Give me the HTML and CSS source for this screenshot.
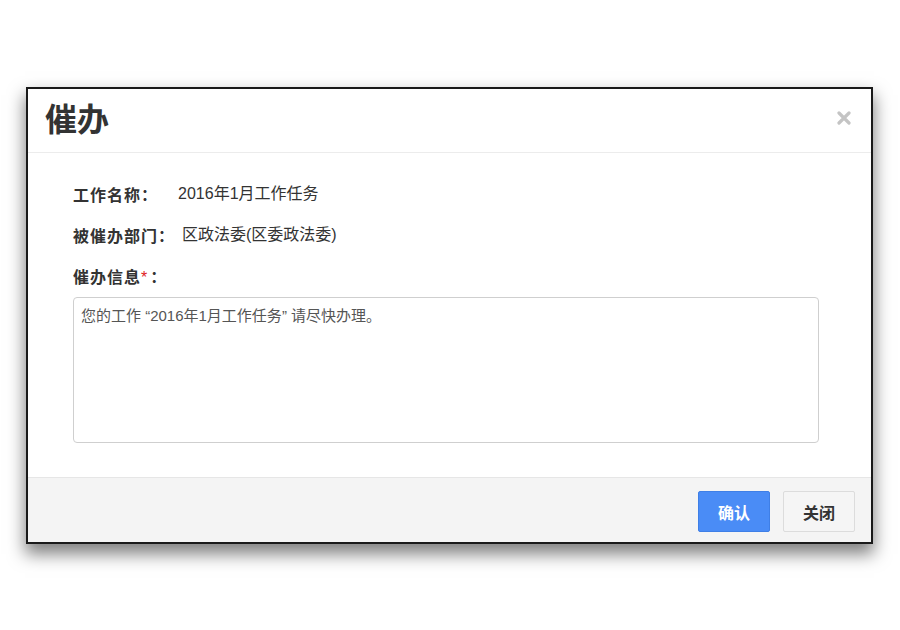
FILE: index.html
```html
<!DOCTYPE html>
<html lang="zh-CN">
<head>
  <meta charset="UTF-8" />
  <title>催办</title>
  <link rel="stylesheet" href="styles.css">
</head>
<body>

  <div class="modal">
    <div class="modal-header">
      <h2>催办</h2>
      <button class="btn-close" title="关闭">
        <svg width="14" height="14" viewBox="0 0 14 14">
          <path d="M2 2 L12 12 M12 2 L2 12" stroke="#c4c4c4" stroke-width="3.2" stroke-linecap="round" />
        </svg>
      </button>
    </div>

    <div class="modal-body">
      <div class="field">
        <span class="label">工作名称<span class="colon">：</span></span>
        <span class="value value-wide">2016年1月工作任务</span>
      </div>
      <div class="field">
        <span class="label">被催办部门<span class="colon">：</span></span>
        <span class="value">区政法委(区委政法委)</span>
      </div>
      <div class="field">
        <span class="label">催办信息<i class="required">*</i><span class="colon">：</span></span>
      </div>
      <textarea class="message">您的工作 “2016年1月工作任务” 请尽快办理。</textarea>
    </div>

    <div class="modal-footer">
      <button class="btn btn-primary">确认</button>
      <button class="btn btn-default">关闭</button>
    </div>
  </div>

</body>
</html>
```

FILE: styles.css
```css
body {
  margin: 0;
  min-height: 630px;
  background: #fff;
  font-family: "Liberation Sans", "Noto Sans CJK SC", sans-serif;
  color: #333;
  overflow: hidden;
}

.modal {
  width: 843px;
  margin: 87px 0 0 26px;
  border: 2px solid #1a1a1a;
  background: #fff;
  box-shadow: 0 9px 16px 1px rgba(0, 0, 0, 0.5);
}

.modal-header {
  height: 63px;
  display: flex;
  align-items: center;
  justify-content: space-between;
  padding: 0 19px 0 17px;
  border-bottom: 1px solid #ececec;
}

.modal-header h2 {
  margin: 0;
  font-size: 32px;
  font-weight: bold;
  color: #333;
  line-height: 1;
  padding-bottom: 2px;
}

.btn-close {
  background: transparent;
  border: none;
  padding: 0;
  width: 16px;
  height: 16px;
  display: flex;
  align-items: center;
  justify-content: center;
  cursor: pointer;
  margin-bottom: 6px;
}

.modal-body {
  padding: 31px 52px 34px 45px;
}

.field {
  height: 20px;
  line-height: 20px;
  margin-bottom: 21px;
  font-size: 16px;
  display: flex;
}

.field:nth-child(3) {
  margin-bottom: 11px;
}

.label {
  font-weight: bold;
  color: #333;
  letter-spacing: 1px;
}

.colon {
  font-family: "Noto Sans CJK TC", sans-serif;
}

.required {
  font-style: normal;
  color: #e02222;
  font-weight: normal;
  margin-right: 2px;
}

.value {
  color: #333;
  margin-left: 7px;
}

.value-wide {
  margin-left: 20px;
}

.message {
  display: block;
  box-sizing: border-box;
  width: 746px;
  height: 146px;
  padding: 8px 7px;
  border: 1px solid #cfcfcf;
  border-radius: 4px;
  font-family: inherit;
  font-size: 15px;
  line-height: 20px;
  color: #555;
  resize: none;
}

.modal-footer {
  display: flex;
  justify-content: flex-end;
  gap: 13px;
  padding: 13px 16px 10px;
  background: #f4f4f4;
  border-top: 1px solid #e6e6e6;
}

.btn {
  width: 72px;
  height: 41px;
  font-family: inherit;
  font-size: 16px;
  font-weight: bold;
  border-radius: 2px;
  cursor: pointer;
}

.btn-primary {
  background: #4a8cf6;
  border: 1px solid #3f7fe6;
  color: #fff;
}

.btn-default {
  background: #f5f5f5;
  border: 1px solid #dcdcdc;
  color: #333;
}
```
